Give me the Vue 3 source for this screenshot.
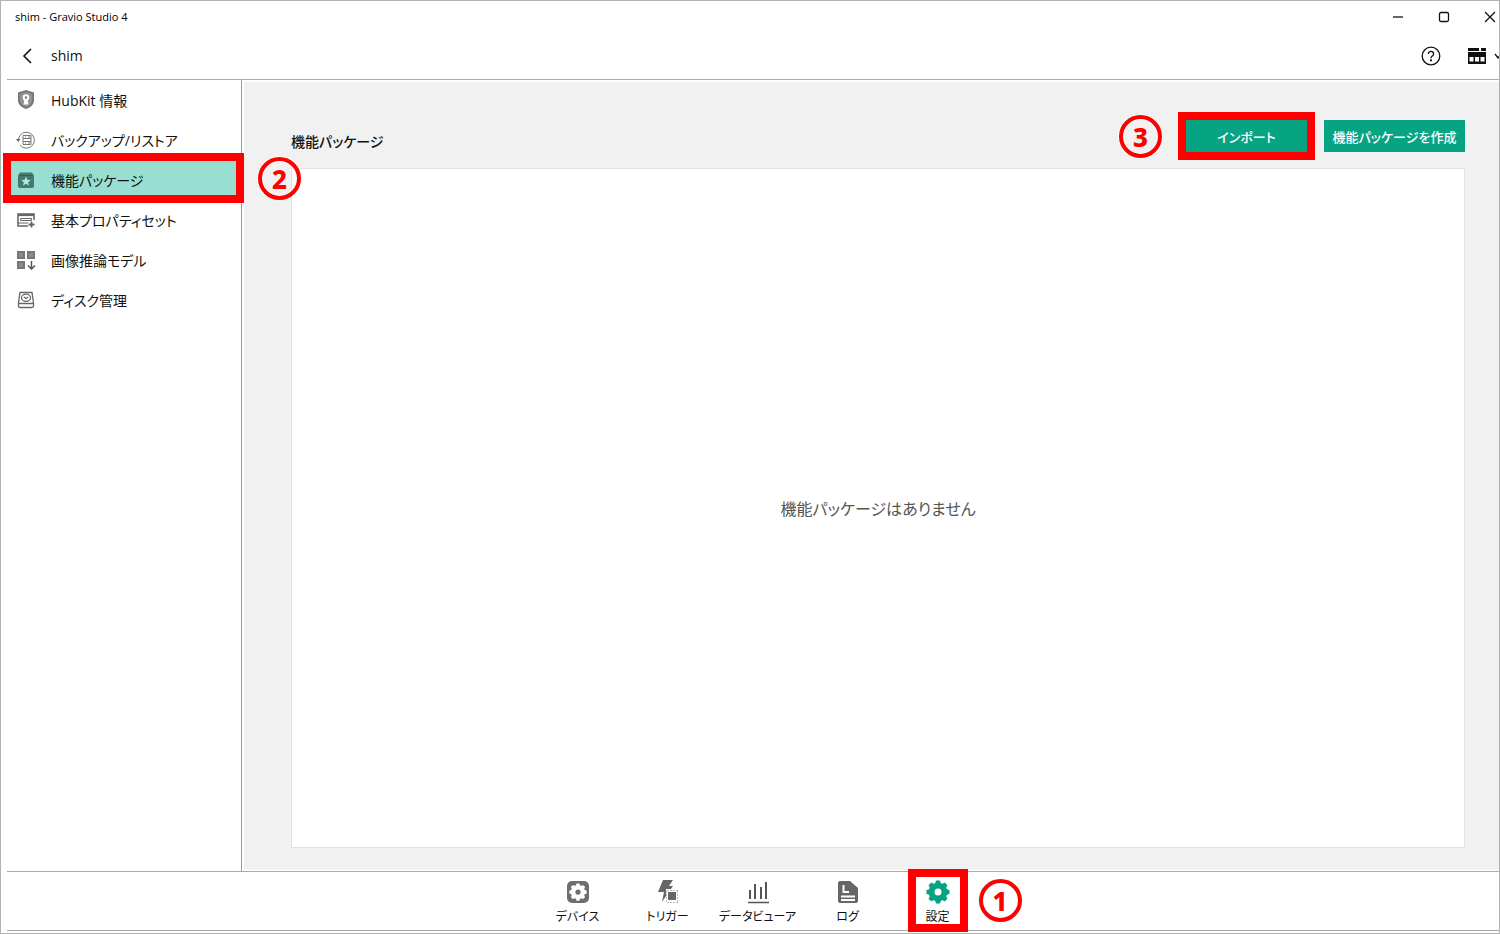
<template>
  <div class="window">
    <header class="top">
      <div class="titlebar">
        <span class="app-title">shim - Gravio Studio 4</span>
        <div class="caption-buttons">
          <button type="button" aria-label="Minimize">
            <svg width="12" height="12" viewBox="0 0 12 12"><path d="M1 6h10" /></svg>
          </button>
          <button type="button" aria-label="Maximize">
            <svg width="12" height="12" viewBox="0 0 12 12"><rect x="1.5" y="1.5" width="9" height="9" rx="1.5" /></svg>
          </button>
          <button type="button" aria-label="Close">
            <svg width="12" height="12" viewBox="0 0 12 12"><path d="M1 1l10 10M11 1L1 11" /></svg>
          </button>
        </div>
      </div>
      <div class="navbar">
        <button type="button" class="back" aria-label="Back">
          <svg width="12" height="18" viewBox="0 0 12 18"><path d="M10 2L3 9l7 7" /></svg>
        </button>
        <span class="hub-name">shim</span>
        <div class="tools">
          <button type="button" aria-label="Help">
            <svg width="20" height="20" viewBox="0 0 20 20">
              <circle cx="10" cy="10" r="8.8" />
              <path d="M7.400 8c0-3.400 5.200-3.400 5.200 0 0 2-2.600 2.200-2.600 4.200" />
              <circle cx="10" cy="14.300" r=".5" class="solid" />
            </svg>
          </button>
          <button type="button" class="layout" aria-label="Layout">
            <svg width="18" height="16" viewBox="0 0 18 16">
              <path class="fill" fill-rule="evenodd" d="M0 0h11v3H0zM13 0h5v3h-5zM0 4h18v12H0zM1.500 9v4.500h4V9zM7 9v4.500h4V9zM12.500 9v4.500h4V9z" />
            </svg>
            <svg width="8" height="8" viewBox="0 0 8 8"><path d="M1 2l3 4 3-4" /></svg>
          </button>
        </div>
      </div>
    </header>

    <div class="body">
      <nav class="sidebar">
        <a
          v-for="item in menu"
          :key="item.id"
          href="#"
          class="menu-item"
          :class="{ selected: item.id === current }"
          @click.prevent="current = item.id"
        >
          <svg v-if="item.id === 'info'" width="20" height="20" viewBox="0 0 20 20">
            <path d="M10 0l8 2.500V10c0 4.500-3 7.200-8 9-5-1.800-8-4.500-8-9V2.500z" fill="#777" />
            <path d="M10 2l6.200 2v6c0 3.400-2.200 5.500-6.200 7-4-1.500-6.200-3.600-6.200-7V4z" fill="#929292" />
            <circle cx="10" cy="7.500" r="3.300" fill="#fff" />
            <path d="M8.500 9h3l1 5.500h-5z" fill="#fff" />
            <circle cx="10" cy="7.500" r="1.200" fill="#777" />
          </svg>
          <svg v-else-if="item.id === 'backup'" width="20" height="20" viewBox="0 0 20 20" fill="none" stroke="#777">
            <path d="M2.500 9A8 8 0 1 1 4 15" />
            <path d="M0 9h4.500l-2.200 3z" fill="#666" stroke="none" />
            <path d="M7 5.500h8v3H7zM7 11.500h8v3H7zM7 8.500v3M15 8.500v3M9 7h1M12 7h2M9 13h1M12 13h2" />
          </svg>
          <svg v-else-if="item.id === 'package'" width="20" height="20" viewBox="0 0 20 20">
            <path d="M4 2.500h12l2 3V16q0 2-2 2H4q-2 0-2-2V5.500z" fill="#477970" />
            <path d="M4 5.500h12" stroke="#315e56" />
            <path d="M10 6.500l1.300 3.300 3.500.2-2.700 2.200.9 3.400-3-1.900-3 1.900.9-3.400-2.700-2.200 3.500-.2z" fill="#a7ecdf" />
          </svg>
          <svg v-else-if="item.id === 'property'" width="20" height="20" viewBox="0 0 20 20" fill="none" stroke="#666">
            <path d="M18 10V4H2v12h10" stroke-width="1.600" />
            <path d="M2 5h16" stroke-width="2.200" />
            <path d="M4.500 8.500h11v2h-11zM2 13h10" />
            <path d="M15.500 11.500v6M12.500 14.500h6" stroke-width="1.800" />
          </svg>
          <svg v-else-if="item.id === 'model'" width="20" height="20" viewBox="0 0 20 20">
            <path d="M1 1h8v8H1zM11 1h8v8h-8zM1 11h8v8H1z" fill="#777" />
            <path d="M3 3h4v4H3zM13 3h4v4h-4zM3 13h4v4H3z" fill="#8c8c8c" />
            <path d="M15.500 11v8M12 15.500l3.500 3.500 3.500-3.500" fill="none" stroke="#555" stroke-width="1.500" />
          </svg>
          <svg v-else width="20" height="20" viewBox="0 0 20 20" fill="none" stroke="#666" stroke-width="1.300">
            <path d="M4 2.500h12L17.500 13v3q0 1.500-1.500 1.500H4q-1.500 0-1.500-1.500v-3zM3 13.500h14" />
            <ellipse cx="10" cy="7.800" rx="4.500" ry="3.600" />
            <path d="M8 7l2 1.500L12 7" />
          </svg>
          <span>{{ item.label }}</span>
          <template v-if="item.id === 'package'">
            <i class="mark mark-menu"></i>
            <b class="step step-menu">2</b>
          </template>
        </a>
      </nav>

      <main class="content">
        <div class="content-head">
          <h1>機能パッケージ</h1>
          <div class="actions">
            <div class="marked-action">
              <b class="step step-import">3</b>
              <button type="button" class="primary import">インポート</button>
              <i class="mark mark-import"></i>
            </div>
            <button type="button" class="primary create">機能パッケージを作成</button>
          </div>
        </div>
        <section class="panel">
          <p>機能パッケージはありません</p>
        </section>
      </main>
    </div>

    <footer class="tabs">
      <a v-for="tab in tabs" :key="tab.id" href="#" class="tab" @click.prevent="activeTab = tab.id">
        <svg v-if="tab.id === 'device'" width="24" height="24" viewBox="0 0 24 24">
          <rect x="1" y="1" width="22" height="22" rx="5" fill="#6e6e6e" />
          <g transform="translate(3 3) scale(.75)">
            <path :d="gear" fill="#fff" />
            <circle cx="12" cy="12" r="3.500" fill="#6e6e6e" />
          </g>
        </svg>
        <svg v-else-if="tab.id === 'trigger'" width="24" height="24" viewBox="0 0 24 24">
          <path d="M7 0h10l-4 6h4L6 22l2-10H2z" fill="#666" />
          <path d="M10 9h14v15H10z" fill="#fff" />
          <path d="M11 10.500h11M11 22.500h11M10.500 11v11M21.500 11v11" stroke="#bbb" stroke-dasharray="2 1" />
          <path d="M12 12h8v8h-8z" fill="#666" />
        </svg>
        <svg v-else-if="tab.id === 'viewer'" width="24" height="24" viewBox="0 0 24 24" stroke="#555" stroke-width="2">
          <path d="M4 10v9M9 4v15M15 7v12M20 2v17" />
          <path d="M2 22.500h21" stroke-width="1.500" />
        </svg>
        <svg v-else-if="tab.id === 'log'" width="24" height="24" viewBox="0 0 24 24">
          <path d="M4 1h10l8 7v13q0 2-2 2H4q-2 0-2-2V3q0-2 2-2z" fill="#666" />
          <path d="M7.500 5v7H13M5 16.500h14M5 20h14" fill="none" stroke="#fff" stroke-width="2" />
        </svg>
        <svg v-else width="24" height="24" viewBox="0 0 24 24">
          <path :d="gear" fill="#07a381" />
          <circle cx="12" cy="12" r="3.500" fill="#fff" />
        </svg>
        <span>{{ tab.label }}</span>
        <template v-if="tab.id === 'settings'">
          <i class="mark mark-tab"></i>
          <b class="step step-tab">1</b>
        </template>
      </a>
    </footer>
  </div>
</template>

<script setup>
import { ref } from 'vue';

const current = ref('package');
const activeTab = ref('settings');

const menu = [
  { id: 'info', label: 'HubKit 情報' },
  { id: 'backup', label: 'バックアップ/リストア' },
  { id: 'package', label: '機能パッケージ' },
  { id: 'property', label: '基本プロパティセット' },
  { id: 'model', label: '画像推論モデル' },
  { id: 'disk', label: 'ディスク管理' },
];

const tabs = [
  { id: 'device', label: 'デバイス' },
  { id: 'trigger', label: 'トリガー' },
  { id: 'viewer', label: 'データビューア' },
  { id: 'log', label: 'ログ' },
  { id: 'settings', label: '設定' },
];

// eight rounded teeth, the hole is drawn on top
const gear =
  'M10 .5h4q.3 2.500 1.500 3 1.200.6 3.200-1l2.800 2.800q-1.600 2-1 3.200.5 1.200 3 1.500v4q-2.500.3-3 1.500-.6 1.200 1 3.200l-2.800 2.800q-2-1.600-3.200-1-1.200.5-1.500 3h-4q-.3-2.500-1.500-3-1.200-.6-3.200 1l-2.800-2.800q1.600-2 1-3.200-.5-1.200-3-1.500v-4q2.500-.3 3-1.500.6-1.200-1-3.200l2.800-2.800q2 1.600 3.200 1 1.200-.5 1.500-3z';
</script>

<style>
body {
  margin: 0;
}
</style>

<style scoped>
* {
  box-sizing: border-box;
}

.window {
  display: flex;
  flex-direction: column;
  height: 100vh;
  overflow: hidden;
  padding-bottom: 2px;
  border: 1px solid #b3b3b3;
  background: #fff;
  color: #111;
  font-family: "Open Sans", "Noto Sans CJK JP", sans-serif;
  font-feature-settings: "palt";
}

button {
  display: flex;
  align-items: center;
  justify-content: center;
  padding: 0;
  border: 0;
  background: none;
  font: inherit;
  color: inherit;
}

a {
  color: inherit;
  text-decoration: none;
}

svg {
  flex: none;
}

.top {
  margin-left: 6px;
  border-bottom: 1px solid #aaa;
}

.top svg {
  fill: none;
  stroke: #111;
  stroke-width: 1.3;
}

.top .fill {
  fill: #111;
  stroke: none;
}

.top .solid {
  fill: #111;
}

.titlebar {
  display: flex;
  align-items: center;
  height: 31px;
  padding-left: 8px;
}

.app-title {
  color: #000;
  font-size: 11px;
}

.caption-buttons {
  display: flex;
  margin-left: auto;
  margin-right: -14px;
}

.caption-buttons button {
  width: 46px;
  height: 31px;
}

.navbar {
  display: flex;
  align-items: center;
  height: 47px;
  padding-left: 14px;
}

.back {
  width: 12px;
}

.back svg {
  stroke-width: 1.6;
}

.hub-name {
  margin-left: 18px;
  font-size: 14px;
}

.tools {
  display: flex;
  gap: 27px;
  margin-left: auto;
  margin-right: -3px;
}

.layout {
  gap: 8px;
}

.body {
  display: flex;
  flex: 1;
  min-height: 0;
}

.sidebar {
  width: 235px;
  margin-left: 6px;
  flex: none;
  border-right: 1px solid #999;
}

.menu-item {
  position: relative;
  display: flex;
  align-items: center;
  gap: 15px;
  height: 40px;
  padding-left: 9px;
  font-size: 14px;
  white-space: nowrap;
}

.selected {
  background: #99dfd1;
}

.content {
  display: flex;
  flex: 1;
  flex-direction: column;
  margin: 2px 0 1px 2px;
  padding: 38px 34px 22px 47px;
  background: #f1f1f1;
}

.content-head {
  display: flex;
  justify-content: space-between;
  height: 48px;
}

h1 {
  margin: 10px 0 0;
  font-size: 14px;
  font-weight: 500;
  line-height: 24px;
}

.actions {
  display: flex;
  align-items: flex-start;
  gap: 17px;
}

.marked-action {
  position: relative;
}

.primary {
  height: 32px;
  background: #07a483;
  color: #fff;
  font-size: 13px;
  font-weight: 500;
  white-space: nowrap;
}

.import {
  width: 121px;
}

.create {
  width: 141px;
}

.panel {
  display: flex;
  flex: 1;
  align-items: center;
  justify-content: center;
  border: 1px solid #e3e3e3;
  background: #fff;
}

.panel p {
  margin: 0;
  color: #555;
  font-size: 16px;
}

.tabs {
  display: flex;
  justify-content: center;
  height: 60px;
  margin-left: 6px;
  padding-left: 9px;
  flex: none;
  border-top: 1px solid #aaa;
  border-bottom: 1px solid #aaa;
}

.tab {
  position: relative;
  display: flex;
  flex-direction: column;
  align-items: center;
  width: 90px;
  padding-top: 8px;
  font-size: 12px;
  line-height: 26px;
}

/* numbered callouts */
.mark {
  position: absolute;
  z-index: 1;
  border: 8px solid #f00;
  pointer-events: none;
}

.mark-menu {
  inset: -7px -3px -3px -4px;
}

.mark-import {
  inset: -8px;
}

.mark-tab {
  top: -3px;
  bottom: -2px;
  left: 15px;
  width: 60px;
}

.step {
  position: absolute;
  z-index: 1;
  display: flex;
  align-items: center;
  justify-content: center;
  width: 43px;
  height: 43px;
  border: 4px solid #f00;
  border-radius: 50%;
  box-shadow: 0 0 0 1px #f4fdfc, inset 0 0 0 1px #f4fdfc;
  color: #f00;
  font-family: "Noto Sans", sans-serif;
  font-size: 26px;
  font-weight: 800;
  line-height: 32px;
}

.step-menu {
  top: -3px;
  left: 251px;
}

.step-import {
  top: -5px;
  right: 145px;
}

.step-tab {
  top: 7px;
  left: 86px;
}
</style>
